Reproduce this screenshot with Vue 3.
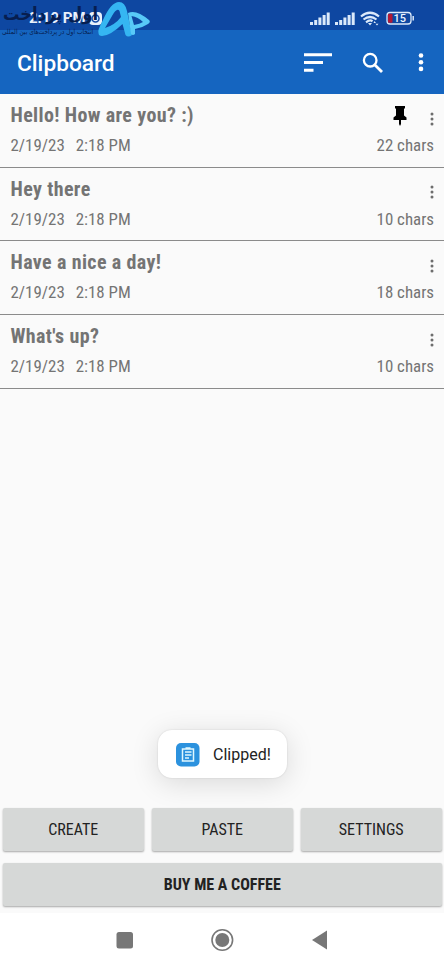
<script setup>
const clips = [
  { title: 'Hello! How are you? :)', chars: '22 chars', pinned: true },
  { title: 'Hey there', chars: '10 chars' },
  { title: 'Have a nice a day!', chars: '18 chars' },
  { title: "What's up?", chars: '10 chars' },
]
</script>

<template>
  <div class="screen">
    <header class="status">
      <span class="clock">2:19 PM</span>
      <svg class="alarm" width="15" height="15" viewBox="0 0 15 15"><rect x="1" y="1" width="13" height="13" rx="4" fill="#e9f1fb" /><circle cx="7.500" cy="7.500" r="3.500" fill="none" stroke="#164aa5" stroke-width="1.500" /></svg>
      <svg class="signals" width="106" height="18" viewBox="0 0 106 18">
        <g fill="#dbe9fa">
          <g v-for="x in [0, 25]" :key="x" :transform="`translate(${x} 0)`">
            <rect x="0" y="13" width="3" height="3" /><rect x="4.200" y="11" width="3" height="5" /><rect x="8.400" y="8.500" width="3" height="7.500" /><rect x="12.600" y="6" width="3" height="10" /><rect x="16.700" y="3.500" width="3" height="12.500" />
          </g>
        </g>
        <g fill="none" stroke="#dbe9fa" stroke-width="2.200"><path d="M51 7.500Q60 0 69 7.500M53.500 10.500Q60 5.500 66.500 10.500M56 13.300Q60 10.200 62.500 12.300" /></g>
        <path d="M58 14h4l-2 2.500zM64.500 12l1.500 2h-2.500zM67 16.500l-1.500-1.800h3z" fill="#dbe9fa" />
        <rect x="77" y="3.500" width="24" height="11.500" rx="3" fill="none" stroke="#dbe9fa" stroke-width="1.300" />
        <rect x="78" y="4.700" width="4.500" height="9" rx="1" fill="#b21835" /><path d="M103.200 7v4.500" stroke="#dbe9fa" stroke-width="1.500" />
        <text x="83.500" y="13" class="battery">15</text>
      </svg>
    </header>
    <div class="appbar">
      <h1>Clipboard</h1>
      <svg class="sort" width="28" height="20" viewBox="0 0 28 20"><path d="M0 1.700h28M0 9.500h19M0 17.200h9.500" stroke="#fff" stroke-width="3" /></svg>
      <svg class="search" width="22" height="22" viewBox="0 0 22 22"><circle cx="8.200" cy="8.200" r="6.300" fill="none" stroke="#fff" stroke-width="2.300" /><path d="M12.700 12.700l7.300 7.300" stroke="#fff" stroke-width="2.800" /></svg>
      <svg class="more" width="6" height="20" viewBox="0 0 6 20" fill="#fff"><circle cx="3" cy="2.500" r="2.300" /><circle cx="3" cy="9.200" r="2.300" /><circle cx="3" cy="15.900" r="2.300" /></svg>
    </div>
    <svg class="watermark" width="152" height="42" viewBox="0 0 152 42">
      <text class="brand" transform="translate(50.500 20) scale(.82 .9)" text-anchor="middle">اول پرداخت</text>
      <text class="tagline" transform="translate(47.500 34) scale(.84 1)" text-anchor="middle">انتخاب اول در پرداخت‌های بین المللی</text>
      <path fill-rule="evenodd" d="M98.500 33Q97 31 103 20Q111 2 119 2Q125 2 127 11L132 35Q128 38 125.500 35L122.500 24Q110 36 102 36Q98.500 36 98.500 33ZM105 28Q115 25 121 17L119.500 11Q117 7 112 16Z" fill="#35b6f2" />
      <path fill-rule="evenodd" d="M128 13Q136 9 149 20Q151 22 148 24Q142 28 135 29L135 34Q133 36 131 34ZM131.500 16L134 25Q140 24 143 22Q138 17 131.500 16Z" fill="#58caf8" />
    </svg>
    <main>
      <article v-for="clip in clips" :key="clip.title" class="clip">
        <div class="line"><h2>{{ clip.title }}</h2>
          <svg v-if="clip.pinned" class="pin" width="14" height="20" viewBox="0 0 14 20"><path d="M2 0h10v2.500h-1v7l2.500 2V14H8v4l-1 2-1-2v-4H.5v-2.500l2.500-2v-7H2z" /></svg>
          <svg class="dots" width="4" height="14" viewBox="0 0 4 14" fill="#6d6d6d"><circle cx="2" cy="2" r="1.500" /><circle cx="2" cy="7" r="1.500" /><circle cx="2" cy="12" r="1.500" /></svg>
        </div>
        <div class="line meta"><span>2/19/23</span><span>2:18 PM</span><span class="chars">{{ clip.chars }}</span></div>
      </article>
    </main>
    <div class="toast">
      <svg width="24" height="24" viewBox="0 0 24 24"><rect width="23.500" height="23.500" rx="5" fill="#2c92de" /><path d="M6.500 6h11v12h-11zM9.500 5h5" fill="none" stroke="#dff8ff" stroke-width="1.500" /><path d="M9 9h6.500M9 12h6.500M9 15h4" stroke="#dff8ff" stroke-width="1.400" /></svg>
      <span>Clipped!</span>
    </div>
    <section class="actions">
      <button>CREATE</button><button>PASTE</button><button>SETTINGS</button><button class="wide">BUY ME A COFFEE</button>
    </section>
    <nav>
      <svg width="444" height="53" viewBox="0 0 444 53"><rect x="116.500" y="19" width="16.500" height="16.500" rx="2.500" fill="#777" /><circle cx="222.300" cy="27" r="10.300" fill="none" stroke="#777" stroke-width="1.600" /><circle cx="222.300" cy="27" r="7" fill="#777" /><path d="M327 17.500v19l-15-9.500z" fill="#777" /></svg>
    </nav>
  </div>
</template>

<style>
body { margin: 0; }
</style>
<style scoped>
.screen { position: relative; width: 444px; height: 966px; background: #fafafa; display: flex; flex-direction: column; font-family: "Roboto Condensed", Roboto, sans-serif; font-stretch: condensed; overflow: hidden; }
.status { height: 30px; box-sizing: border-box; flex: none; background: #0e47a1; display: flex; align-items: center; padding: 6px 28px 0 29px; color: #e9f1fb; }
.clock { font: 700 15px Roboto, sans-serif; }
.alarm { margin-left: 2px; }
.signals { margin-left: auto; }
.battery { font: 500 11px Roboto, sans-serif; fill: #eef5ff; }
.appbar { height: 64px; flex: none; box-sizing: border-box; background: #1565c0; display: flex; align-items: center; padding: 2px 20px 0 17px; }
h1 { margin: 0 auto 0 0; color: #fff; font: 500 22.700px Roboto, sans-serif; }
.sort { position: relative; left: 1px; }
.search { margin-left: 31px; }
.more { margin-left: 34px; }
.watermark { position: absolute; left: 0; top: 0; }
.brand { font: 700 20px "DejaVu Sans", sans-serif; fill: #071e50; }
.tagline { font: 7px "DejaVu Sans", sans-serif; fill: #071e50; }
main { flex: 1; }
.clip { height: 73.740px; box-sizing: border-box; border-bottom: 1px solid #8b8b8b; padding: 8px 10px 0 10.500px; color: #747474; }
.line { display: flex; align-items: center; height: 26px; }
h2 { margin: 0 auto 0 0; font-size: 20px; font-weight: 700; letter-spacing: .37px; }
.meta { height: 34px; font-size: 16.900px; gap: 11px; }
.chars { margin-left: auto; }
.pin { margin-right: 23px; position: relative; top: 1px; }
.dots { position: relative; top: 3.500px; }
.toast { position: absolute; left: 158px; top: 730px; width: 129px; height: 48px; box-sizing: border-box; border-radius: 14px; background: #fff; display: flex; align-items: center; padding: 1px 0 0 18px; gap: 13px; color: #222; font: 16px Roboto, sans-serif; box-shadow: 0 5px 28px #0002, 0 0 2px #0002; }
.actions { display: grid; grid-template-columns: repeat(3, 1fr); gap: 12px 8.500px; padding: 0 2.500px 7px 3px; }
button { height: 43px; border: 0; border-radius: 2px; background: #d6d8d7; color: #222; font: 16px "Roboto Condensed", Roboto, sans-serif; font-stretch: condensed; box-shadow: 0 1px 2px #0005; }
.wide { grid-column: 1 / -1; font-weight: 700; }
nav { height: 53px; flex: none; background: #fff; }
nav svg { display: block; }
</style>
